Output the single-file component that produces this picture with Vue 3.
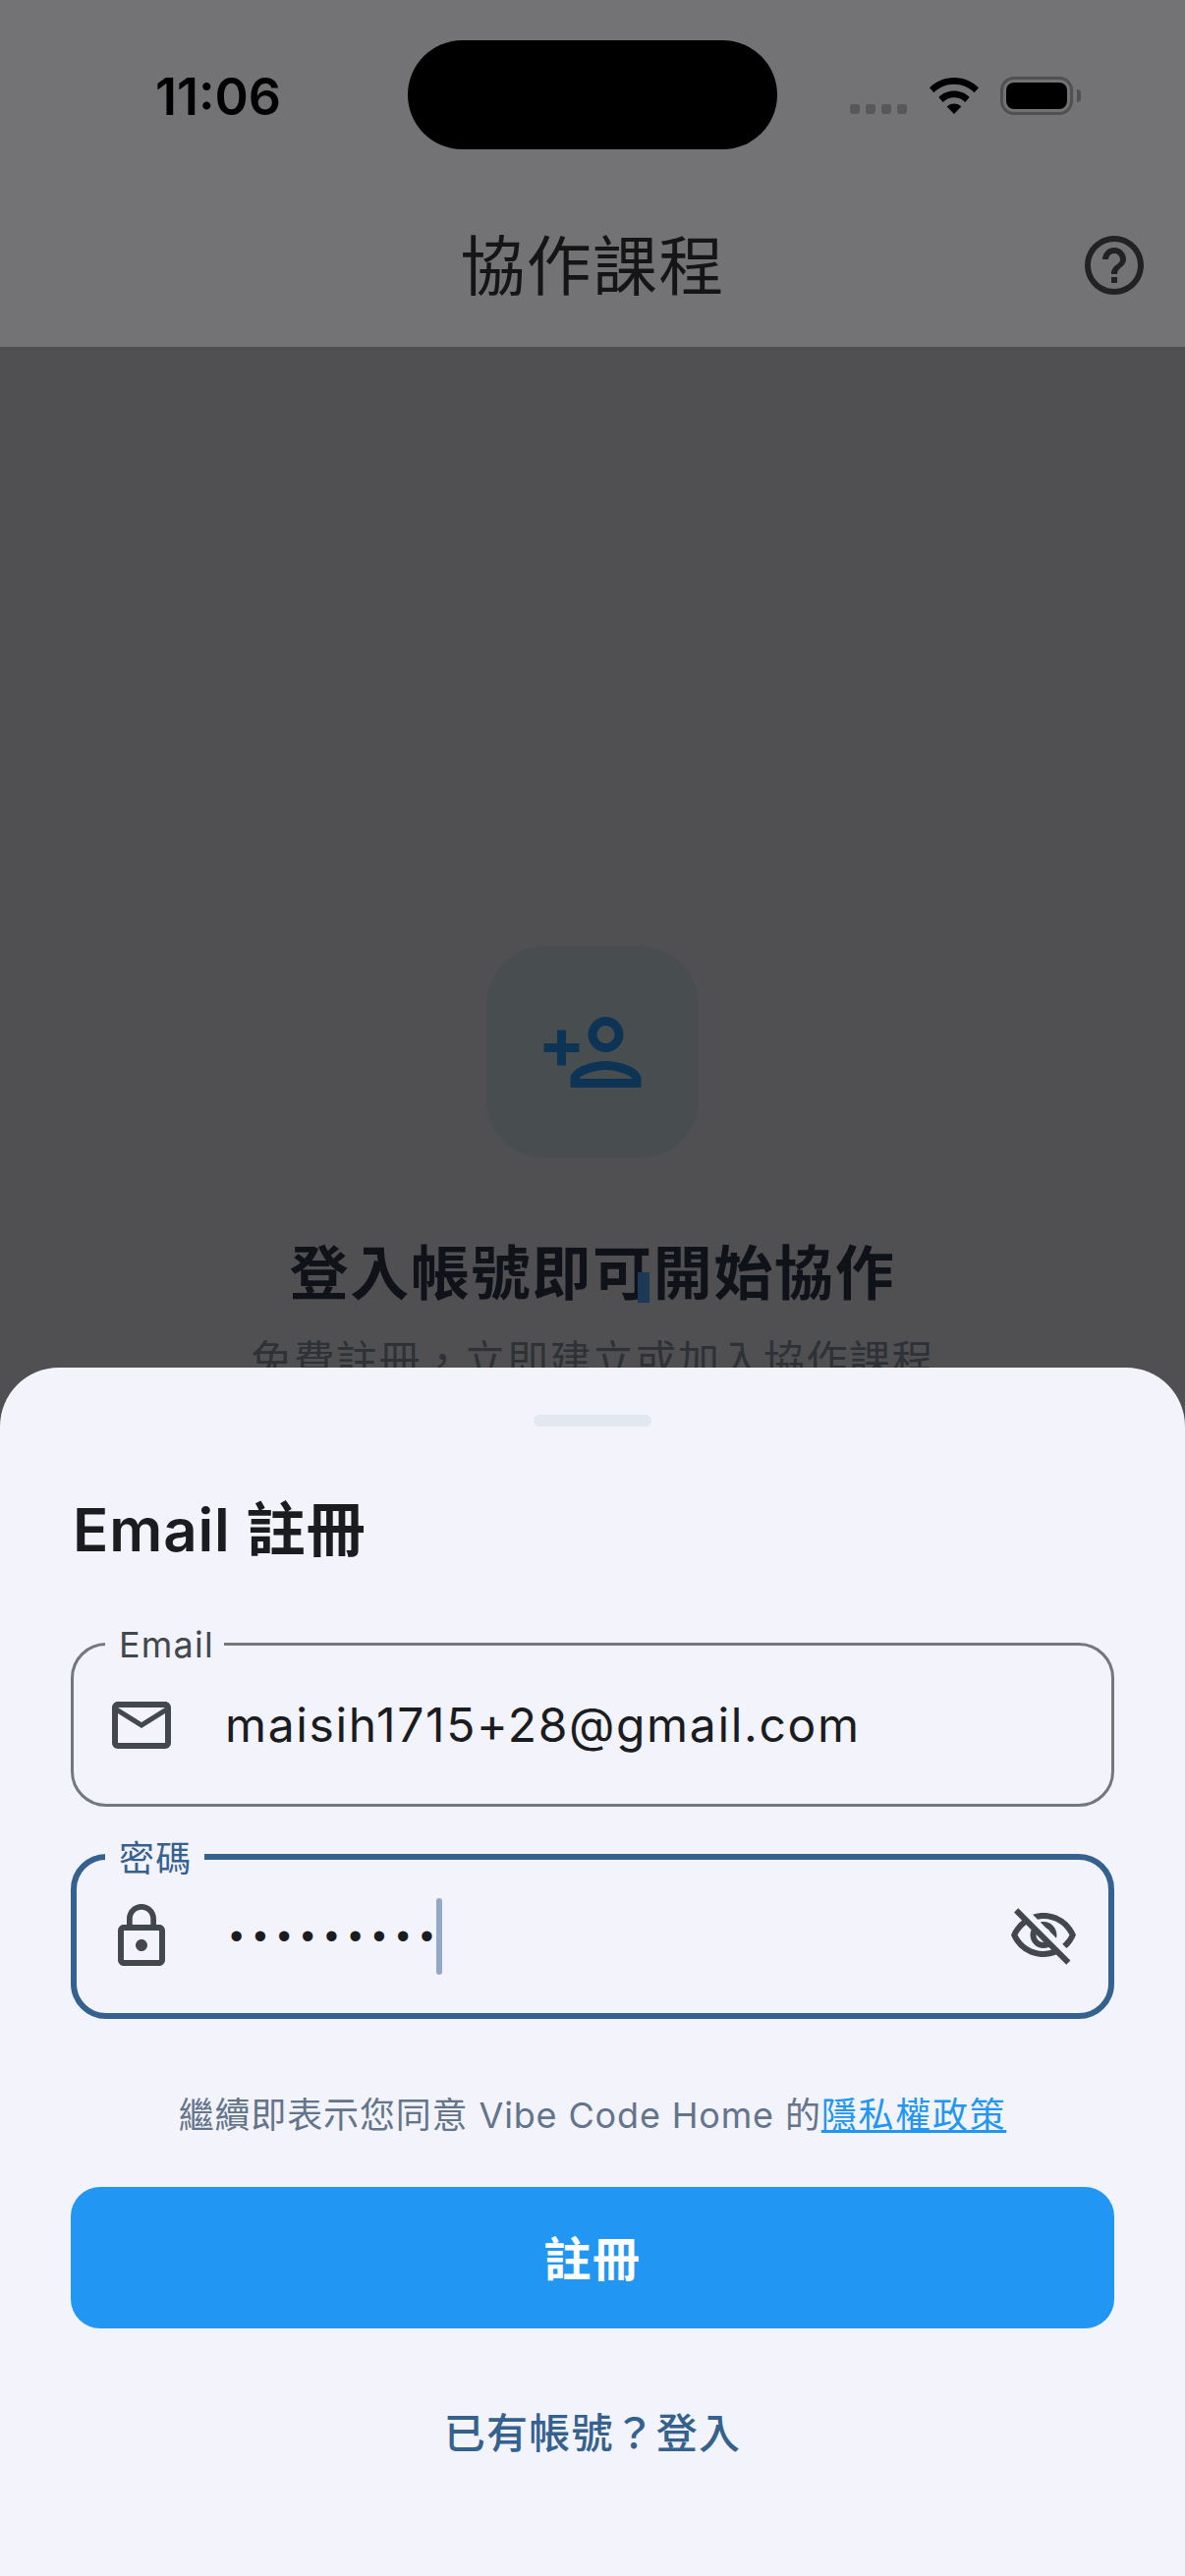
<template>
  <div class="page">
    <header class="top">
      <div class="status">
        <span class="time">11:06</span>
        <div class="island"></div>
        <div class="signal">
          <i v-for="n in 4" :key="n" class="bar"></i>
        </div>
        <svg class="wifi" viewBox="0 0 50 37" fill="#000">
          <path d="M25 0c9.800 0 18.600 3.900 25 10.300l-4.400 5C40.300 10 33 6.800 25 6.800S9.700 10 4.400 15.300L0 10.300C6.400 3.900 15.200 0 25 0z" />
          <path d="M25 13.500c6.100 0 11.600 2.400 15.700 6.400l-4.400 5C33.400 22 29.400 20.300 25 20.300s-8.400 1.700-11.300 4.600l-4.400-5c4.100-4 9.600-6.400 15.700-6.400z" />
          <path d="M25 26.500c2.800 0 5.400 1.100 7.300 3L25 37l-7.300-7.500c1.900-1.900 4.500-3 7.300-3z" />
        </svg>
        <div class="battery"><div class="level"></div></div>
        <i class="cap"></i>
      </div>
      <div class="appbar">
        <h1 class="app-title">協作課程</h1>
        <svg class="help" viewBox="0 0 24 24" fill="currentColor">
          <path d="M11 18h2v-2h-2v2zm1-16C6.480 2 2 6.480 2 12s4.480 10 10 10 10-4.480 10-10S17.520 2 12 2zm0 18c-4.410 0-8-3.590-8-8s3.590-8 8-8 8 3.590 8 8-3.590 8-8 8zm0-14c-2.210 0-4 1.790-4 4h2c0-1.100.9-2 2-2s2 .9 2 2c0 2-3 1.750-3 5h2c0-2.250 3-2.500 3-5 0-2.210-1.790-4-4-4z" />
        </svg>
      </div>
    </header>

    <main class="empty">
      <div class="icon-box">
        <svg class="add-icon" viewBox="0 0 24 24" fill="currentColor">
          <path d="M15 12c2.210 0 4-1.790 4-4s-1.790-4-4-4-4 1.790-4 4 1.790 4 4 4zm0-6c1.100 0 2 .9 2 2s-.9 2-2 2-2-.9-2-2 .9-2 2-2zm0 8c-2.670 0-8 1.340-8 4v2h16v-2c0-2.660-5.330-4-8-4zm-6 4c.22-.72 3.310-2 6-2 2.700 0 5.800 1.290 6 2H9zm-3-3v-3h3v-2H6V7H4v3H1v2h3v3h2z" />
        </svg>
      </div>
      <h2 class="empty-title">登入帳號即可開始協作<i class="drag-mark"></i></h2>
      <p class="empty-sub">免費註冊，立即建立或加入協作課程</p>
    </main>

    <section class="sheet">
      <div class="handle"></div>
      <h3 class="sheet-title">Email 註冊</h3>

      <div class="field">
        <span class="label">Email</span>
        <svg class="field-icon" viewBox="0 0 24 24" fill="currentColor">
          <path d="M22 6c0-1.100-.9-2-2-2H4c-1.100 0-2 .9-2 2v12c0 1.100.9 2 2 2h16c1.100 0 2-.9 2-2V6zm-2 0l-8 5-8-5h16zm0 12H4V8l8 5 8-5v10z" />
        </svg>
        <span class="value">{{ email }}</span>
      </div>

      <div class="field focused">
        <span class="label">密碼</span>
        <svg class="field-icon" viewBox="0 0 24 24" fill="currentColor">
          <path d="M12 17c1.100 0 2-.9 2-2s-.9-2-2-2-2 .9-2 2 .9 2 2 2zm6-9h-1V6c0-2.760-2.240-5-5-5S7 3.240 7 6v2H6c-1.100 0-2 .9-2 2v10c0 1.100.9 2 2 2h12c1.100 0 2-.9 2-2V10c0-1.100-.9-2-2-2zM8.900 6c0-1.710 1.390-3.100 3.100-3.100s3.100 1.390 3.100 3.100v2H8.900V6zM18 20H6V10h12v10z" />
        </svg>
        <span class="dots">{{ mask }}</span>
        <i class="caret"></i>
        <svg class="eye" viewBox="0 0 24 24" fill="currentColor">
          <path d="M12 6c3.790 0 7.170 2.130 8.820 5.500-.59 1.220-1.420 2.270-2.410 3.120l1.410 1.410c1.390-1.230 2.490-2.770 3.180-4.530C21.270 7.110 17 4 12 4c-1.270 0-2.490.2-3.640.57l1.650 1.650C10.660 6.090 11.320 6 12 6zm-1.070 1.140L13 9.210c.57.25 1.030.71 1.280 1.280l2.070 2.070c.08-.34.14-.7.14-1.070C16.500 9.010 14.480 7 12 7c-.37 0-.72.05-1.070.14zM2.010 3.870l2.680 2.680C3.060 7.830 1.770 9.530 1 11.500 2.730 15.890 7 19 12 19c1.520 0 2.980-.29 4.320-.82l3.420 3.420 1.410-1.410L3.420 2.450 2.010 3.870zm7.500 7.500l2.610 2.610c-.04.01-.08.02-.12.02-1.380 0-2.500-1.120-2.500-2.500 0-.05.01-.08.01-.13zm-3.400-3.400l1.750 1.750c-.23.55-.36 1.150-.36 1.780 0 2.480 2.020 4.500 4.500 4.500.63 0 1.230-.13 1.770-.36l.98.98c-.88.24-1.800.38-2.750.38-3.790 0-7.170-2.130-8.820-5.500.7-1.430 1.720-2.610 2.930-3.530z" />
        </svg>
      </div>

      <p class="terms">繼續即表示您同意 Vibe Code Home 的<a class="link">隱私權政策</a></p>
      <button class="submit">註冊</button>
      <a class="switch">已有帳號？登入</a>
    </section>
  </div>
</template>

<script setup>
const email = 'maisih1715+28@gmail.com'
const mask = '•'.repeat(9)
</script>

<style>
html,
body {
  margin: 0;
  background: #505052;
}
</style>

<style scoped>
.page {
  position: relative;
  width: 1206px;
  height: 2622px;
  overflow: hidden;
  display: flex;
  flex-direction: column;
  background: #505052;
  font-family: Inter, "Noto Sans CJK TC", sans-serif;
}

.top {
  height: 353px;
  background: #737375;
  display: flex;
  flex-direction: column;
}

.status {
  height: 192px;
  display: flex;
  align-items: flex-start;
  box-sizing: border-box;
  padding: 41px 0 0 158px;
}

.time {
  width: 257px;
  margin-top: 29px;
  font-size: 52px;
  line-height: 58px;
  font-weight: 600;
  color: #000;
}

.island {
  width: 376px;
  height: 111px;
  border-radius: 56px;
  background: #000;
  margin-right: 74px;
}

.signal {
  display: flex;
  gap: 6px;
  margin-top: 65px;
}

.bar {
  width: 10px;
  height: 10px;
  border-radius: 3px;
  background: #58585a;
}

.wifi {
  width: 50px;
  height: 37px;
  margin: 38px 22px 0 23px;
}

.battery {
  width: 74px;
  height: 39px;
  margin-top: 37px;
  box-sizing: border-box;
  border: 3px solid #505052;
  border-radius: 14px;
  padding: 3px;
}

.level {
  height: 100%;
  background: #000;
  border-radius: 8px;
}

.cap {
  width: 4px;
  height: 13px;
  margin: 50px 0 0 4px;
  border-radius: 0 6px 6px 0;
  background: #505052;
}

.appbar {
  position: relative;
  flex: 1;
  display: flex;
  justify-content: center;
}

.app-title {
  margin: 31px 0 0;
  font-size: 66px;
  line-height: 96px;
  font-weight: 400;
  letter-spacing: 1.3px;
  color: #151515;
}

.help {
  position: absolute;
  right: 36px;
  top: 42px;
  width: 72px;
  height: 72px;
  color: #222224;
}

.empty {
  display: flex;
  flex-direction: column;
  align-items: center;
  padding-top: 610px;
}

.icon-box {
  width: 216px;
  height: 216px;
  border-radius: 60px;
  background: #484e50;
  display: flex;
  align-items: center;
  justify-content: center;
  color: #0d3454;
}

.add-icon {
  width: 108px;
  height: 108px;
}

.empty-title {
  position: relative;
  margin: 72px 0 0;
  font-size: 60px;
  line-height: 90px;
  font-weight: 700;
  letter-spacing: 1.7px;
  color: #0f1218;
}

.drag-mark {
  position: absolute;
  left: 354px;
  top: 44px;
  width: 12px;
  height: 31px;
  background: #1c3a57;
}

.empty-sub {
  margin: 14px 0 0;
  font-size: 42px;
  line-height: 60px;
  letter-spacing: 1.5px;
  color: #2e3136;
}

.sheet {
  position: absolute;
  left: 0;
  right: 0;
  bottom: 0;
  height: 1230px;
  box-sizing: border-box;
  padding: 48px 72px 0;
  background: #f2f3fb;
  border-radius: 60px 60px 0 0;
  display: flex;
  flex-direction: column;
}

.handle {
  align-self: center;
  width: 120px;
  height: 12px;
  border-radius: 6px;
  background: #e2e8f0;
}

.sheet-title {
  margin: 63px 0 0 2px;
  font-size: 60px;
  line-height: 84px;
  font-weight: 600;
  letter-spacing: 0.9px;
  color: #1a1c20;
}

.field {
  position: relative;
  height: 167px;
  box-sizing: border-box;
  margin-top: 73px;
  border: 3px solid #73777f;
  border-radius: 36px;
  display: flex;
  align-items: center;
  padding-left: 33px;
  color: #1a1c20;
}

.field + .field {
  margin-top: 48px;
}

.field.focused {
  height: 168px;
  border: 6px solid #35618f;
  padding-left: 30px;
}

.label {
  position: absolute;
  left: 32px;
  top: -23px;
  padding: 0 10px 0 14px;
  font-size: 36px;
  line-height: 44px;
  letter-spacing: 1.2px;
  color: #43474e;
  background: #f2f3fb;
}

.focused .label {
  left: 29px;
  top: -23px;
  padding-right: 13px;
  color: #35618f;
}

.field-icon {
  flex: none;
  width: 72px;
  height: 72px;
  color: #43474e;
}

.value {
  margin-left: 49px;
  font-size: 48px;
  letter-spacing: 1.65px;
  color: #1a1c20;
}

.dots {
  margin-left: 54px;
  font-family: "Liberation Sans", sans-serif;
  font-size: 38px;
  letter-spacing: 10.9px;
  color: #1a1c20;
}

.caret {
  width: 6px;
  height: 78px;
  margin-left: -8px;
  border-radius: 3px;
  background: #94a9c8;
}

.eye {
  width: 72px;
  height: 72px;
  margin-left: auto;
  margin-right: 30px;
  color: #43474e;
}

.terms {
  margin: 71px 0 0;
  text-align: center;
  font-size: 36px;
  line-height: 54px;
  letter-spacing: 0.85px;
  color: #64748b;
}

.link {
  color: #2196f3;
  text-decoration: underline;
  letter-spacing: 1.7px;
}

.submit {
  height: 144px;
  margin-top: 46px;
  padding: 0 0 5px;
  border: none;
  border-radius: 30px;
  background: #2196f3;
  color: #fff;
  font-family: inherit;
  font-size: 48px;
  font-weight: 700;
  letter-spacing: 1.5px;
}

.switch {
  align-self: center;
  margin-top: 76px;
  font-size: 42px;
  line-height: 62px;
  font-weight: 500;
  letter-spacing: 1.2px;
  color: #35618f;
}
</style>
